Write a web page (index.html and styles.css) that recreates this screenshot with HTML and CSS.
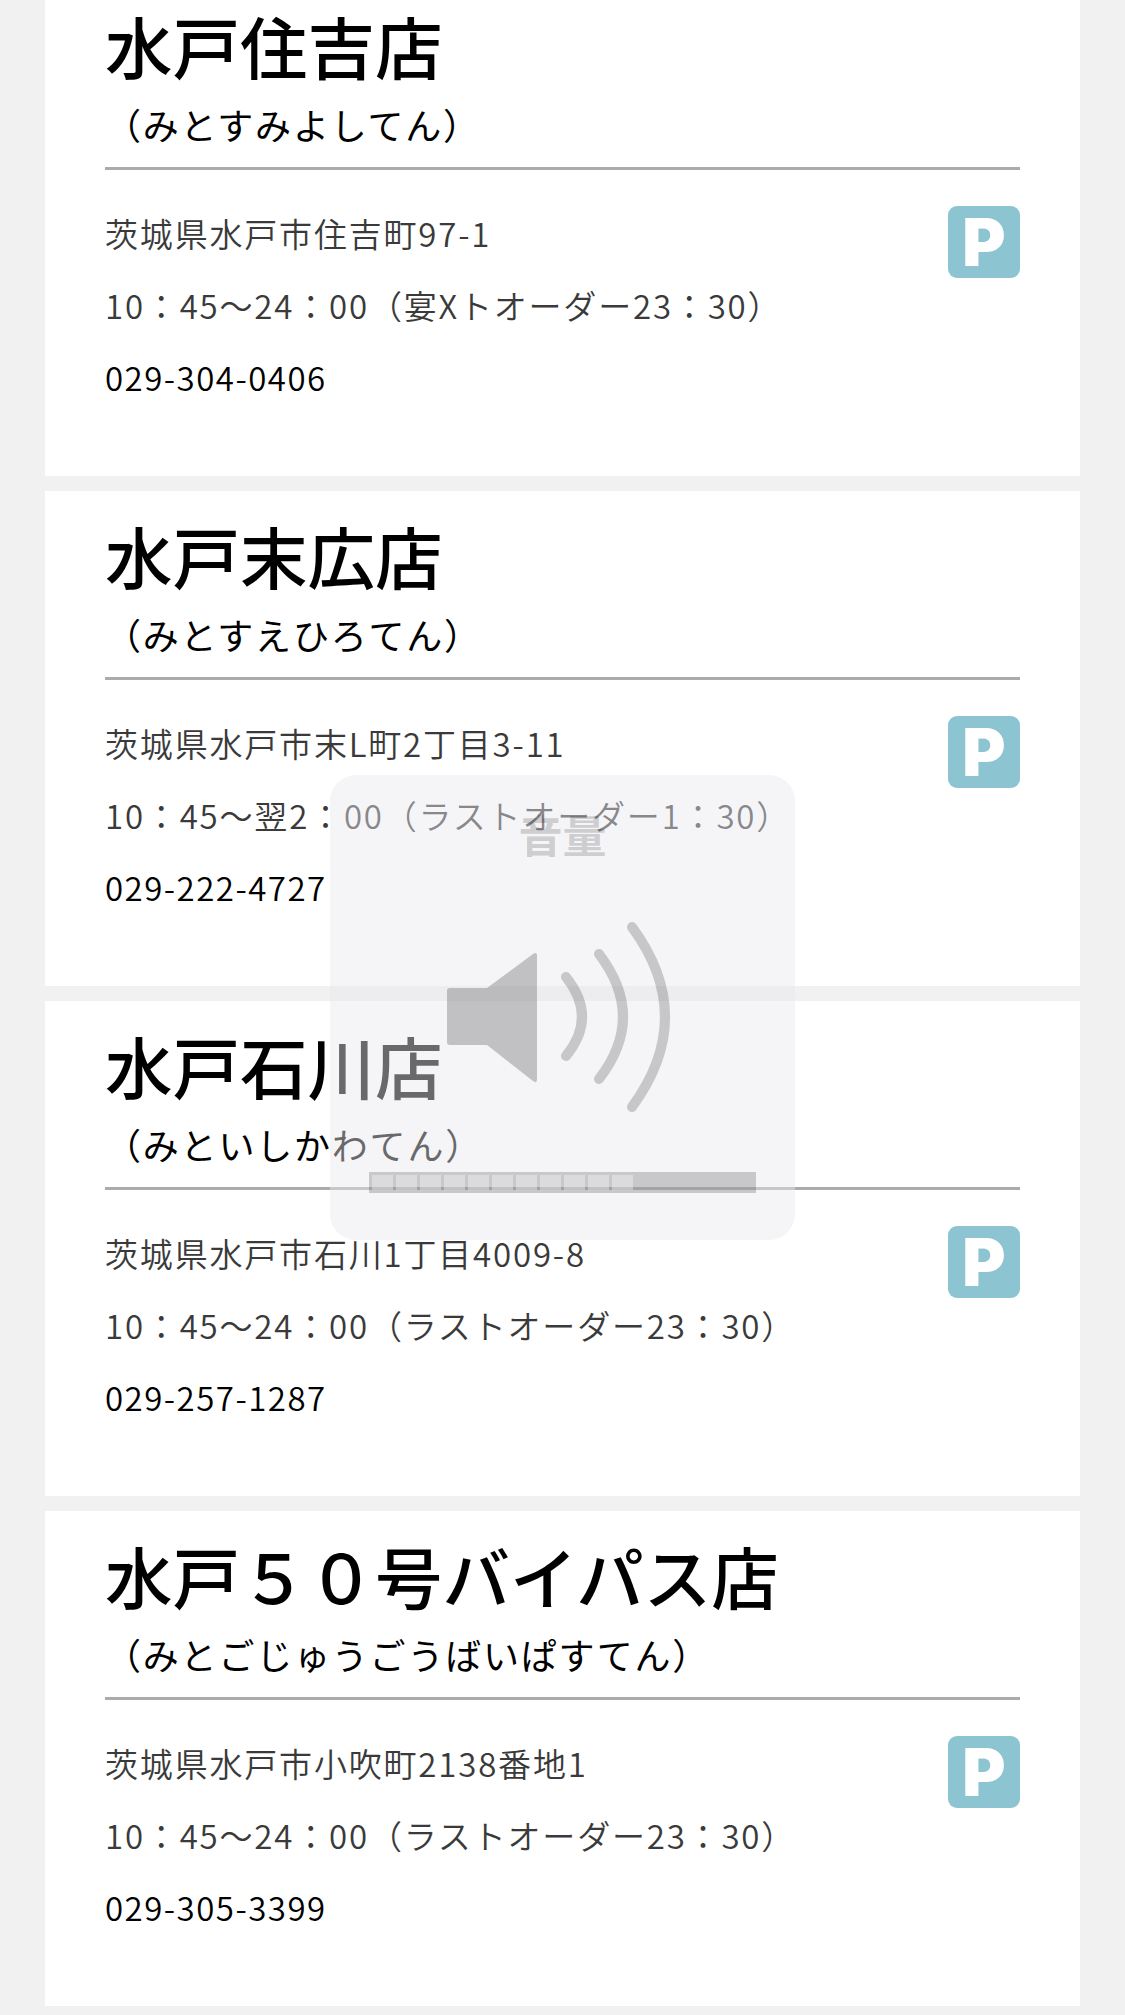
FILE: index.html
```html
<!DOCTYPE html>
<html lang="ja">
<head>
  <meta charset="UTF-8" />
  <title>店舗一覧</title>
  <link rel="stylesheet" href="styles.css">
</head>
<body>
  <main class="shop-list">
    <section class="shop">
      <h2>水戸住吉店</h2>
      <p class="kana">（みとすみよしてん）</p>
      <div class="info">
        <div>
          <p class="addr">茨城県水戸市住吉町97-1</p>
          <p class="addr">10：45～24：00（宴Xトオーダー23：30）</p>
          <p class="tel">029-304-0406</p>
        </div>
        <span class="parking">P</span>
      </div>
    </section>
    <section class="shop">
      <h2>水戸末広店</h2>
      <p class="kana">（みとすえひろてん）</p>
      <div class="info">
        <div>
          <p class="addr">茨城県水戸市末L町2丁目3-11</p>
          <p class="addr">10：45～翌2：00（ラストオーダー1：30）</p>
          <p class="tel">029-222-4727</p>
        </div>
        <span class="parking">P</span>
      </div>
    </section>
    <section class="shop">
      <h2>水戸石川店</h2>
      <p class="kana">（みといしかわてん）</p>
      <div class="info">
        <div>
          <p class="addr">茨城県水戸市石川1丁目4009-8</p>
          <p class="addr">10：45～24：00（ラストオーダー23：30）</p>
          <p class="tel">029-257-1287</p>
        </div>
        <span class="parking">P</span>
      </div>
    </section>
    <section class="shop">
      <h2>水戸５０号バイパス店</h2>
      <p class="kana">（みとごじゅうごうばいぱすてん）</p>
      <div class="info">
        <div>
          <p class="addr">茨城県水戸市小吹町2138番地1</p>
          <p class="addr">10：45～24：00（ラストオーダー23：30）</p>
          <p class="tel">029-305-3399</p>
        </div>
        <span class="parking">P</span>
      </div>
    </section>
  </main>

  <div class="volume-hud">
    <div class="volume-title">音量</div>
    <svg class="volume-icon" width="240" height="200" viewBox="0 -20 240 200">
      <path class="cone" d="M10 47 H47 L93 13 Q97 10 97 15 V138 Q97 143 93 140 L47 104 H10 Q7 104 7 101 V50 Q7 47 10 47 Z"/>
      <path class="wave" d="M126 36 Q158 76 126 115"/>
      <path class="wave" d="M159 13 Q207 76 159 138"/>
      <path class="wave" d="M192 -14 Q258 76 192 166"/>
    </svg>
    <div class="volume-bar">
      <i></i><i></i><i></i><i></i><i></i><i></i><i></i><i></i><i></i><i></i><i></i>
    </div>
  </div>
</body>
</html>
```

FILE: styles.css
```css
* {
  box-sizing: border-box;
}

html, body {
  margin: 0;
  height: 2015px;
  overflow: hidden;
}

body {
  position: relative;
  background-color: #f1f1f1;
  font-family: "Noto Sans CJK JP", "Noto Sans", sans-serif;
  color: #000;
}

.shop-list {
  display: flex;
  flex-direction: column;
  gap: 15px;
  margin: -19px 45px 0;
}

.shop {
  background-color: #fff;
  padding: 19px 60px 63px;
}

.shop h2 {
  margin: 0 0 4px;
  font-size: 67.5px;
  font-weight: 500;
  line-height: 90px;
}

.kana {
  margin: 0;
  padding-bottom: 13px;
  border-bottom: 3px solid #ababab;
  font-size: 36px;
  font-weight: 400;
  letter-spacing: 0.05em;
  line-height: 60px;
}

.info {
  display: flex;
  justify-content: space-between;
  align-items: flex-start;
  margin-top: 27px;
}

.info p {
  margin: 0;
  font-size: 33px;
  line-height: 72px;
  letter-spacing: 0.055em;
  font-weight: 350;
}

.addr {
  color: #3a3a3a;
}

.info .tel {
  color: #000;
  letter-spacing: 0.045em;
}

.parking {
  display: flex;
  align-items: center;
  justify-content: center;
  width: 72px;
  height: 72px;
  margin-top: 9px;
  border-radius: 9px;
  background-color: #8cc5d1;
  color: #fff;
  font-family: Inter, sans-serif;
  font-size: 66px;
  font-weight: 900;
  line-height: 72px;
}

/* system volume overlay */
.volume-hud {
  position: absolute;
  left: 330px;
  top: 775px;
  width: 465px;
  height: 465px;
  border-radius: 26px;
  background-color: rgba(233, 233, 240, 0.45);
}

.volume-title {
  margin-top: 29px;
  text-align: center;
  font-size: 44px;
  font-weight: 700;
  line-height: 60px;
  color: rgba(0, 0, 0, 0.18);
}

.volume-icon {
  position: absolute;
  left: 110px;
  top: 146px;
}

.cone {
  fill: rgba(0, 0, 0, 0.21);
}

.wave {
  fill: none;
  stroke: rgba(0, 0, 0, 0.19);
  stroke-width: 10;
  stroke-linecap: round;
}

.volume-bar {
  position: absolute;
  left: 39px;
  top: 397px;
  display: flex;
  gap: 3px;
  width: 387px;
  height: 21px;
  padding: 3px;
  background-color: rgba(20, 20, 20, 0.2);
}

.volume-bar i {
  width: 21px;
  height: 15px;
  background-color: rgba(255, 255, 255, 0.35);
}
```
